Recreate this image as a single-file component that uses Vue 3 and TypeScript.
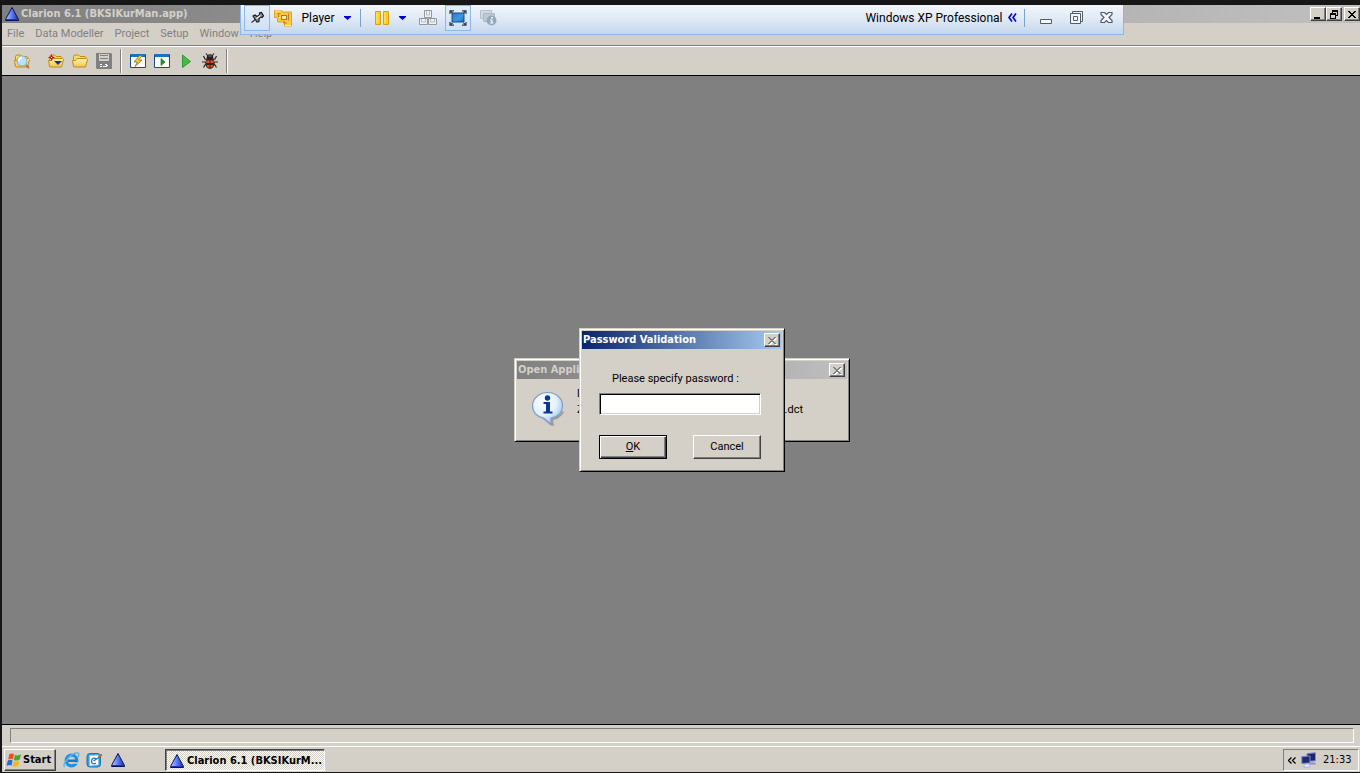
<script setup lang="ts">
import { ref } from 'vue'

const menus: string[] = ['File', 'Data Modeller', 'Project', 'Setup', 'Window', 'Help']
const password = ref('')
</script>

<template>
  <svg class="defs" aria-hidden="true">
    <defs>
      <linearGradient id="tri" x1="0" x2="1" y1="0" y2="0">
        <stop offset="0" stop-color="#c4d0ff" />
        <stop offset=".5" stop-color="#5878f4" />
        <stop offset="1" stop-color="#1c2ea0" />
      </linearGradient>
      <linearGradient id="gold" x1="0" x2="0" y1="0" y2="1">
        <stop offset="0" stop-color="#fff6b4" />
        <stop offset="1" stop-color="#f0c44c" />
      </linearGradient>
      <linearGradient id="screen" x1="0" x2="1" y1="0" y2="1">
        <stop offset="0" stop-color="#2a78c8" />
        <stop offset=".6" stop-color="#3f97e0" />
        <stop offset="1" stop-color="#1860ae" />
      </linearGradient>
      <radialGradient id="bubble" cx=".4" cy=".3" r=".75">
        <stop offset="0" stop-color="#ffffff" />
        <stop offset=".55" stop-color="#e2f0fe" />
        <stop offset="1" stop-color="#86b8ee" />
      </radialGradient>
      <symbol id="clarion" viewBox="0 0 14 14">
        <path d="M7 .5 13.500 12.500v1H.5v-1z" fill="url(#tri)" stroke="#0a1258" />
        <path d="M1 12.500h12" stroke="#1f36b4" />
      </symbol>
      <symbol id="folder" viewBox="0 0 16 16">
        <path d="M1.500 13V3.500l1-1.500h4L8 3.500h5l1 1V8" fill="#f7d868" stroke="#c08c18" />
        <path d="M1.500 13.500.5 7.500h3L5 5.500h9.500l1 1-2 7.500H3z" fill="url(#gold)" stroke="#c08c18" />
      </symbol>
      <symbol id="cross" viewBox="0 0 10 9">
        <path d="M1 1h2v1h1v1h2v-1h1v-1h2v1h-1v1h-1v1h-1v1h1v1h1v1h1v1h-2v-1h-1v-1h-2v1h-1v1h-2v-1h1v-1h1v-1h1v-1h-1v-1h-1v-1h-1z" />
      </symbol>
    </defs>
  </svg>

  <div class="desktop">
    <main class="app">
      <header class="caption">
        <svg class="i14"><use href="#clarion" /></svg>
        <h1>Clarion 6.1 (BKSIKurMan.app)</h1>
        <div class="caption-buttons">
          <button class="cap" aria-label="Minimize"><svg viewBox="0 0 10 9"><path d="M1 7h6v2H1z" /></svg></button>
          <button class="cap" aria-label="Restore"><svg viewBox="0 0 10 9"><path fill-rule="evenodd" d="M3 0h6v6H7v3H1V3h2zM4 2v1h3v2h1V2zM2 5v3h4V5z" /></svg></button>
          <button class="cap last" aria-label="Close"><svg><use href="#cross" /></svg></button>
        </div>
      </header>

      <nav class="menubar">
        <button v-for="m in menus" :key="m">{{ m }}</button>
      </nav>

      <div class="toolbar">
        <button class="tool pick" aria-label="Pick">
          <svg viewBox="0 0 16 16"><use href="#folder" /><circle cx="8" cy="8" r="5" fill="#b8e2fa" stroke="#8aaac4" /><path d="M5 8c0-2 1-3.500 3-3.500" fill="none" stroke="#fff" stroke-width="2" /><path d="m12 12 3 3" stroke="#b07040" stroke-width="2" /></svg>
        </button>
        <button class="tool" aria-label="New application">
          <svg viewBox="0 0 16 16"><use href="#folder" /><path d="M3.500 1.500v6M.5 4.500h6" stroke="#d41010" /><path d="M2.500 3.500h2v2h-2z" fill="#fff" stroke="#d41010" /><path d="M6 8h8l-4 4z" fill="#10388c" /></svg>
        </button>
        <button class="tool" aria-label="Open"><svg><use href="#folder" /></svg></button>
        <button class="tool" aria-label="Save" disabled>
          <svg viewBox="0 0 16 16"><path d="M0 0h15l1 1v15H1l-1-1z" fill="#808080" /><path d="M3 1h10v7H3z" fill="#d4d0c8" /><path d="M4 2.500h8M4 5.500h8" stroke="#808080" /><path d="M4 11h2v1H4zM4 13h2v1H4zM7 13h2v1H7zM9 11h2v1h1v1h-1v1H9v-1h1v-1H9z" fill="#fff" /></svg>
        </button>
        <span class="sep"></span>
        <button class="tool" aria-label="Generate">
          <svg viewBox="0 0 16 16"><path d="M.5 1.500h15v13H.5z" fill="#fff" stroke="#124e8c" /><path d="M1 1h14v3H1z" fill="#1c70c0" /><path d="M9.500 2.500 4 9h3.500L5 13.500l7-6.500H8.500l4-4.500z" fill="#f8d048" stroke="#8a6820" stroke-width=".8" /></svg>
        </button>
        <button class="tool" aria-label="Make">
          <svg viewBox="0 0 16 16"><path d="M.5 1.500h15v13H.5z" fill="#fff" stroke="#124e8c" /><path d="M1 1h14v3H1z" fill="#1c70c0" /><path d="m7 5.500 4 3.500-4 3.500z" fill="#18a020" stroke="#086010" stroke-width=".6" /></svg>
        </button>
        <button class="tool" aria-label="Run">
          <svg viewBox="0 0 16 16"><path d="m4.500 2 8 6.500-8 6z" fill="#4cb848" stroke="#319434" /></svg>
        </button>
        <button class="tool" aria-label="Debug">
          <svg viewBox="0 0 16 16"><path d="M4 .5 6 3M12 .5 10 3M1.500 3 3 6l3 1M14.500 3 13 6l-3 1M0 9h16M1.500 14.500 3 12l3-1.500M14.500 14.500 13 12l-3-1.500" fill="none" stroke="#2c2824" stroke-width="1.200" /><ellipse cx="8" cy="10.500" rx="4.700" ry="5.200" fill="#302420" /><path d="M4 8.500Q8 6 12 8.500L11.500 10h-7zM4.500 12h7l-1 2.500h-5z" fill="#e84c18" /><path d="M8 7v8.500" stroke="#402018" /><path d="M5 2.500Q8 0 11 2.500L11.500 6h-7z" fill="#25211f" /><path d="M6.500 3h3" stroke="#8a8680" /></svg>
        </button>
        <span class="sep"></span>
      </div>

      <section class="workspace">
        <div class="dialog notice" role="dialog" aria-label="Open Application">
          <div class="dialog-title idle"><span>Open Appli</span><button class="cap" disabled aria-label="Close notice"><svg><use href="#cross" /></svg></button></div>
          <div class="notice-body">
            <svg class="info" viewBox="0 0 34 36"><path d="M11 27Q24 30 32 20l1 1Q29 28 22 29l1 6-4-1-7-6z" fill="#6c7078" opacity=".55" /><path d="M16.500 1.500C25 1.500 31.500 7 31.500 14.500S26 26.500 20 27v6.500L12.500 27C6 26 1.500 21 1.500 14.500S8 1.500 16.500 1.500z" fill="url(#bubble)" stroke="#829fc0" stroke-width="1.200" /><circle cx="16.500" cy="7" r="2.700" fill="#0b3898" /><path d="M12.500 11h6.500v9.500h2.500v2h-9v-2H15v-7.500h-2.500z" fill="#0b3898" /></svg>
            <div class="notice-text"><p>D</p><p><span>Z</span><span>.dct</span></p></div>
          </div>
        </div>

        <form class="dialog prompt" role="dialog" aria-labelledby="pwt" @submit.prevent>
          <div class="dialog-title"><span id="pwt">Password Validation</span><button type="button" class="cap" disabled aria-label="Close dialog"><svg><use href="#cross" /></svg></button></div>
          <div class="prompt-body">
            <label for="pw">Please specify password :</label>
            <input id="pw" v-model="password" type="password" />
            <div class="actions">
              <button type="submit" class="push default"><span><u>O</u>K</span></button>
              <button type="button" class="push">Cancel</button>
            </div>
          </div>
        </form>
      </section>

      <footer class="status"><div></div></footer>
    </main>

    <footer class="taskbar">
      <button class="start">
        <svg viewBox="0 0 17 16"><path d="M3.500 2Q6 .3 8.500 2L7.300 7.500Q5 6 2.300 7.500z" fill="#e85020" /><path d="M9.500 2.500Q12.500 4 16 2L14.700 7.500Q11.500 9.300 8.300 8z" fill="#50a828" /><path d="M2 8.500Q4.500 7 7 8.500L5.800 14Q3.500 12.500.5 14z" fill="#2c68d8" /><path d="M8 9Q11 10.500 14.500 8.700L13 14Q10 16 6.800 14.500z" fill="#f4b818" /></svg>
        Start
      </button>
      <div class="quick">
        <button aria-label="Internet Explorer"><svg viewBox="0 0 17 16"><circle cx="8.500" cy="8.500" r="5.300" fill="none" stroke="#2490dc" stroke-width="3.200" /><path d="M5 7.500h9v2.500H5z" fill="#1c78cc" /><path d="M11 10.200h5l-1 1.500h-4z" fill="#d4d0c8" /><path d="M1.500 15C-1 11.500 8 1 14.500 1c2 0 1.500 2.500.5 4" fill="none" stroke="#52b8f0" stroke-width="1.400" /></svg></button>
        <button aria-label="Show Desktop"><svg viewBox="0 0 17 16"><rect x="1" y="1.500" width="13.500" height="13.500" rx="3" fill="#399bdc" stroke="#1974b4" /><path d="M3.500 3.500 12.500 3v10l-9 1z" fill="#fff" stroke="#8bb8d8" stroke-width=".7" /><path d="M10 6.500c-3-1-4.500.5-4.500 3s2.500 3 4.500 1.500M7.500 9l6-4" fill="none" stroke="#1976b8" stroke-width="1.300" /><path d="m12.500 3 3-1 1 1.500-3.500 2.500z" fill="#d96020" /></svg></button>
        <button aria-label="Clarion"><svg class="i14"><use href="#clarion" /></svg></button>
      </div>
      <button class="task"><svg class="i14"><use href="#clarion" /></svg>Clarion 6.1 (BKSIKurM...</button>
      <div class="tray">
        <button aria-label="Show hidden icons"><svg class="chev" viewBox="0 0 8 7"><path d="M3.500.5l-3 3 3 3M7.500.5l-3 3 3 3" fill="none" stroke="#000" stroke-width="1.300" /></svg></button>
        <svg class="net" viewBox="0 0 16 16"><path d="M6 1.500 14.500.8v8L6 9.500z" fill="#1c2668" stroke="#7c8cd8" /><path d="M9 10.500h5l1 2h-6z" fill="#8b90d0" /><path d="M.8 4.500 9 4v7L.8 11.500z" fill="#222c64" stroke="#7c8cd8" /><path d="M3 13q3-2 6-.5l-1 2.500H3z" fill="#eef0ff" stroke="#999fd4" stroke-width=".7" /></svg>
        <time>21:33</time>
      </div>
    </footer>

    <div class="vm">
      <button class="vm-toggle pin" aria-label="Pin"><svg viewBox="0 0 18 16"><path d="M3.500 12.500 8 9" stroke="#333" stroke-width="1.200" /><path d="M5 6 7 5l2 1.500 2.500-1.500L11.500 3l2-.5 2 3.500-1.500 1.500-1.500-.5-1.500 2v2.500L9 12z" fill="#8c9096" stroke="#1c1c1e" stroke-width="1.200" /><path d="m8.500 8.500 4-3" stroke="#f4f5f7" stroke-width="1.200" /></svg></button>
      <button class="player">
        <svg viewBox="0 0 18 18"><path d="M.5 1.500h7l1.500 1.500h8.500v14h-7v-4h-7v-4.500h-3z" fill="#ffc83a" stroke="#e0a030" /><path d="M1 2h6M3.500 8.500h3M11 16.500h6" stroke="#fff0ad" /><rect x="7.500" y="6.500" width="5" height="4" fill="#ffe8a0" stroke="#a87828" /><path d="M3.500 4.500h3M4.500 4.500v4M14.500 4.500v7M10 12v2h3" fill="none" stroke="#b88428" stroke-width="1.200" /></svg>
        <span>Player</span>
        <svg class="arrow" viewBox="0 0 7 4"><path d="M0 0h7v1L3.500 4 0 1z" /></svg>
      </button>
      <span class="vm-sep"></span>
      <button class="pause" aria-label="Suspend">
        <svg viewBox="0 0 15 14"><path d="M.5.5h5v13h-5zM8.500.5h5v13h-5z" fill="#ffcf25" stroke="#dca00c" /><path d="M2 2v10M10 2v10" stroke="#ffec8b" /></svg>
        <svg class="arrow" viewBox="0 0 7 4"><path d="M0 0h7v1L3.500 4 0 1z" /></svg>
      </button>
      <button class="keys" aria-label="Send Ctrl+Alt+Del"><svg viewBox="0 0 18 16"><g fill="#eef0f2" stroke="#92989f"><path d="M5.500.5h7v7h-7zM.5 8.500h8v6h-8zM9.500 8.500h8v6h-8z" /><path d="M7.500 1v4h3V1M2.500 9v3h4V9M11.500 9v3h4V9" stroke="#b8bdc3" /></g></svg></button>
      <button class="vm-toggle" aria-label="Full screen"><svg viewBox="0 0 18 16"><path d="M3 3h12v9H3z" fill="url(#screen)" stroke="#164f88" /><path d="M1 4V.8h4M13 .8h4V4M17 12v3.200h-4M5 15.200H1V12M1 1l2.500 2M17 1l-2.500 2M17 15l-2.500-2M1 15l2.500-2" fill="none" stroke="#303e4c" stroke-width="1.200" /></svg></button>
      <button class="devices" aria-label="Devices" disabled><svg viewBox="0 0 17 17"><path d="M.5 1.500h11v8H.5z" fill="#d0dae5" stroke="#b4c0ce" /><path d="M3.500 4.500h11v8h-11z" fill="#bcc9d7" stroke="#aab9ca" /><circle cx="11.500" cy="11.500" r="5" fill="#94a7bd" /><path d="M11 8h2v1.500h-2zM10 10.500h2.500v3h1v1h-3.500v-1h1v-2h-1z" fill="#edf3fa" /></svg></button>
      <span class="vm-name">Windows XP Professional</span>
      <button class="vm-collapse" aria-label="Collapse"><svg viewBox="0 0 9 9"><path d="M4 .5l-3 4 3 4M8 .5l-3 4 3 4" fill="none" stroke="#0000e0" stroke-width="1.600" /></svg></button>
      <span class="vm-sep"></span>
      <div class="vm-window">
        <button aria-label="Minimize player"><svg viewBox="0 0 13 13"><path d="M.5 8.500h11v4H.5z" fill="#f7f9fc" stroke="#545a6c" /></svg></button>
        <button aria-label="Restore player"><svg viewBox="0 0 13 13"><path d="M2.500.5h10v10h-10z" fill="#f3f6fb" stroke="#545a6c" /><path d="M.5 2.500h10v10H.5zM3.500 5.500h4v4h-4z" fill="#f3f6fb" stroke="#545a6c" /></svg></button>
        <button aria-label="Close player"><svg viewBox="0 0 13 13"><path d="M1 1.500h3.500l2 2 2-2H12v2L9 6.500l3 3v2H8.500l-2-2-2 2H1v-2l3-3-3-3z" fill="#f5f7fb" stroke="#545a6c" stroke-width="1.200" /></svg></button>
      </div>
    </div>
  </div>
</template>

<style>
html,
body {
  margin: 0;
  background: #161616;
}
</style>

<style scoped>
* {
  box-sizing: border-box;
}
.defs {
  position: absolute;
  width: 0;
  height: 0;
}
button {
  font: inherit;
  color: inherit;
  background: none;
  border: 0;
  padding: 0;
  margin: 0;
}
svg {
  display: block;
  flex: none;
}
.desktop {
  position: relative;
  display: flex;
  flex-direction: column;
  height: 100vh;
  padding: 5px 0 1px 2px;
  overflow: hidden;
  background: #161616;
  font: 11px/14px "DejaVu Sans Condensed", "Liberation Sans", sans-serif;
  color: #000;
}
.app {
  flex: 1;
  min-height: 0;
  display: flex;
  flex-direction: column;
  background: #d4d0c8;
}
.i14 {
  width: 14px;
  height: 14px;
}
.caption {
  display: flex;
  align-items: center;
  height: 18px;
  padding-left: 3px;
  gap: 2px;
  background: linear-gradient(90deg, #808080, #c0c0c0);
}
h1 {
  flex: 1;
  margin: 0;
  font-size: 11px;
  line-height: 14px;
  color: #d4d0c8;
}
.caption-buttons {
  display: flex;
}
.cap {
  display: grid;
  place-items: center;
  width: 16px;
  height: 14px;
  background: #d4d0c8;
  border: 1px solid;
  border-color: #fff #404040 #404040 #fff;
  box-shadow: inset -1px -1px #808080;
}
.cap svg {
  width: 10px;
  height: 9px;
}
.cap:disabled {
  color: #808080;
  fill: #808080;
}
.cap:disabled svg {
  filter: drop-shadow(1px 1px 0 #fff);
}
.last {
  margin-left: 2px;
}
.menubar {
  display: flex;
  gap: 11px;
  height: 22px;
  padding-left: 5px;
  align-items: center;
  color: #808080;
  font-family: Roboto, "Liberation Sans", sans-serif;
}
.toolbar {
  display: flex;
  align-items: center;
  height: 31px;
  padding-left: 8px;
  border-top: 1px solid #808080;
  border-bottom: 1px solid #000;
  box-shadow: inset 0 1px #fff;
}
.tool {
  display: grid;
  place-items: center;
  width: 24px;
  height: 24px;
}
.tool svg {
  width: 16px;
  height: 16px;
}
.pick {
  margin-right: 10px;
}
.sep {
  width: 2px;
  height: 24px;
  margin: 0 4px;
  border-left: 1px solid #808080;
  border-right: 1px solid #fff;
}
.workspace {
  flex: 1;
  min-height: 0;
  display: grid;
  place-items: center;
  padding-left: 2px;
  background: #808080;
}
.dialog {
  grid-area: 1 / 1;
  padding: 2px;
  background: #d4d0c8;
  border: 1px solid;
  border-color: #d4d0c8 #000 #000 #d4d0c8;
  box-shadow: inset 1px 1px #fff, inset -1px -1px #808080;
}
.notice {
  width: 336px;
  height: 84px;
}
.prompt {
  width: 206px;
  height: 144px;
}
.dialog-title {
  display: flex;
  align-items: center;
  justify-content: space-between;
  height: 18px;
  padding: 0 2px 0 1px;
  background: linear-gradient(90deg, #0a246a, #a6caf0);
  color: #fff;
  font-weight: bold;
}
.idle {
  background: linear-gradient(90deg, #808080, #c0c0c0);
  color: #d4d0c8;
}
.notice-body {
  display: flex;
  padding: 12px 44px 0 14px;
  gap: 12px;
  font-family: Roboto, "Liberation Sans", sans-serif;
}
.info {
  width: 34px;
  height: 36px;
}
.notice-text {
  flex: 1;
}
.notice-text p {
  display: flex;
  justify-content: space-between;
  margin: 0;
  line-height: 16px;
}
.notice-text p:first-child {
  margin-top: -5px;
}
.prompt-body {
  display: flex;
  flex-direction: column;
  padding: 22px 21px 0 17px;
  font-family: Roboto, "Liberation Sans", sans-serif;
}
.prompt-body label {
  padding-left: 13px;
  line-height: 16px;
}
#pw {
  width: 100%;
  height: 22px;
  margin-top: 6px;
  padding: 0 3px;
  background: #fff;
  border: 1px solid;
  border-color: #808080 #fff #fff #808080;
  box-shadow: inset 1px 1px #000, inset -1px -1px #d4d0c8;
  border-radius: 0;
  outline: 0;
}
.actions {
  display: flex;
  justify-content: space-between;
  margin-top: 20px;
}
.push {
  width: 68px;
  height: 24px;
  border: 1px solid;
  border-color: #fff #404040 #404040 #fff;
  box-shadow: inset -1px -1px #808080;
}
.default {
  border-color: #000;
  box-shadow: inset 1px 1px #fff, inset -1px -1px #404040, inset -2px -2px #808080;
}
.status {
  height: 22px;
  padding: 3px 6px 4px 8px;
  border-top: 1px solid #000;
}
.status div {
  height: 15px;
  border: 1px solid;
  border-color: #808080 #fff #fff #808080;
}
.taskbar {
  display: flex;
  height: 26px;
  padding: 2px 1px 1px 2px;
  background: #d4d0c8;
  border-top: 1px solid #fff;
}
.start {
  display: flex;
  align-items: center;
  gap: 1px;
  width: 52px;
  padding-left: 1px;
  border: 1px solid;
  border-color: #fff #404040 #404040 #fff;
  box-shadow: inset -1px -1px #808080;
  font-weight: bold;
}
.start svg {
  width: 16px;
  height: 16px;
}
.quick {
  display: flex;
  padding-left: 4px;
}
.quick button {
  display: grid;
  place-items: center;
  width: 23px;
}
.quick svg:not(.i14) {
  width: 17px;
  height: 16px;
}
.task {
  display: flex;
  align-items: center;
  gap: 3px;
  width: 160px;
  margin-left: 36px;
  padding: 2px 0 0 4px;
  border: 1px solid;
  border-color: #404040 #fff #fff #404040;
  box-shadow: inset 1px 1px #808080;
  background: repeating-conic-gradient(#fff 0 25%, #d4d0c8 0 50%) 0 0 / 2px 2px;
  font-weight: bold;
  white-space: nowrap;
}
.tray {
  display: flex;
  align-items: center;
  margin-left: auto;
  width: 76px;
  padding-left: 4px;
  border: 1px solid;
  border-color: #808080 #fff #fff #808080;
}
.chev {
  width: 8px;
  height: 7px;
}
.net {
  width: 16px;
  height: 16px;
  margin: 0 6px 0 5px;
}
.vm {
  position: absolute;
  top: 5px;
  left: 3px;
  right: 0;
  margin: 0 auto;
  width: 65%;
  height: 30px;
  display: flex;
  align-items: center;
  padding: 0 10px 4px 3px;
  border: 1px solid #8fb6e4;
  border-top: 0;
  background: linear-gradient(#f2f6fc, #dfe9f5 50%, #c3d7ee);
  font: 12px/16px Roboto, "Open Sans", sans-serif;
}
.vm-toggle {
  display: grid;
  place-items: center;
  width: 26px;
  height: 26px;
  border: 1px solid #8fb6e4;
  background: linear-gradient(#e4eefa, #cfe0f4);
}
.vm-toggle svg {
  width: 18px;
  height: 16px;
}
.player {
  display: flex;
  align-items: center;
  padding: 0 9px 0 4px;
}
.player span {
  margin: 0 10px;
}
.player svg:first-child {
  width: 18px;
  height: 18px;
}
.player .arrow,
.arrow {
  width: 7px;
  height: 4px;
  fill: #0000d8;
}
.vm-sep {
  width: 1px;
  height: 18px;
  background: #7aa4d0;
}
.pause {
  display: flex;
  align-items: center;
  gap: 9px;
  padding: 0 13px 0 14px;
}
.pause svg:first-child {
  width: 15px;
  height: 14px;
}
.keys {
  margin-right: 8px;
}
.keys svg {
  width: 18px;
  height: 16px;
}
.devices {
  margin-left: 9px;
}
.devices svg {
  width: 17px;
  height: 17px;
}
.vm-name {
  margin-left: auto;
}
.vm-collapse {
  margin: 0 7px 0 5px;
}
.vm-collapse svg {
  width: 9px;
  height: 9px;
}
.vm-window {
  display: flex;
  gap: 17px;
  padding-left: 15px;
}
.vm-window svg {
  width: 13px;
  height: 13px;
}
</style>
